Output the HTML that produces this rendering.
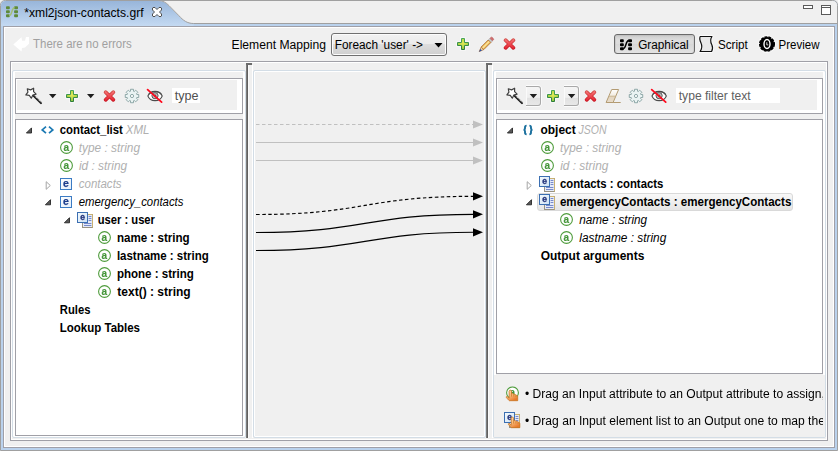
<!DOCTYPE html>
<html><head><meta charset="utf-8"><title>xml2json-contacts.grf</title>
<style>
html,body{margin:0;padding:0}
body{width:838px;height:451px;overflow:hidden;background:#f0f0f0;position:relative;font-family:"Liberation Sans",sans-serif;font-size:12px;color:#000}
.a{position:absolute}
.t{position:absolute;white-space:pre;line-height:12px;font-size:12px;transform-origin:0 0}
.b{font-weight:bold}
.i{font-style:italic}
svg{position:absolute;overflow:visible}
.box{position:absolute;box-sizing:border-box}

</style></head>
<body>
<!-- window frame -->
<svg class="a" style="left:0;top:0" width="838" height="451" viewBox="0 0 838 451">
  <defs>
    <linearGradient id="tabg" x1="0" y1="0" x2="0" y2="1">
      <stop offset="0" stop-color="#98b5da"/>
      <stop offset="1" stop-color="#c4daf2"/>
    </linearGradient>
  </defs>
  <!-- outer frame fill (blue band) -->
  <path d="M0.5,450.5 L0.5,5.5 Q0.5,0.5 5.5,0.5 L832.5,0.5 Q837.5,0.5 837.5,5.5 L837.5,450.5 Z" fill="#bad2ed" stroke="#a0a0a0"/>
  <!-- tab bar background right of tab -->
  <path d="M5.5,1 L832.5,1 Q837,1 837,5.5 L837,23 L1,23 L1,5.5 Q1,1 5.5,1 Z" fill="#f0f0f0"/>
  <!-- tab -->
  <path d="M1,26 L1,5.5 Q1,1 5.5,1 L158,1 C163,1 166,2.9 169,5.9 L179,16.1 C183,20.4 187,23.5 193.5,23.5 L193.5,26 Z" fill="url(#tabg)"/>
  <path d="M158,0.5 C163,0.5 166,2.6 169,5.6 L179,15.8 C183,20.2 187,23.5 193.5,23.5 L837,23.5" fill="none" stroke="#a0a0a0"/>
  <!-- inner content -->
  <rect x="3.5" y="26.5" width="831" height="421" fill="#f0f0f0" stroke="#a0a0a8"/>
  <path d="M4.5,446.5 L4.5,27.5 L833.5,27.5 L833.5,446.5 Z" fill="none" stroke="#ffffff"/>
</svg>
<!-- outer panel -->
<div class="box" style="left:10px;top:61px;width:818px;height:380px;border:1px solid #a0a0a7;box-shadow:inset 0 0 0 1px #fff"></div>
<!-- sub panels -->
<div class="box" style="left:12px;top:70px;width:234px;height:368px;border:1px solid #d3dde6;border-radius:2px;box-shadow:inset 0 0 0 1px #fff,inset 2px 0 0 0 #fff,inset -2px 0 0 0 #fff"></div>
<div class="box" style="left:253px;top:70px;width:233px;height:368px;border:1px solid #d3dde6;border-radius:2px;box-shadow:inset 0 0 0 1px #fff"></div>
<div class="box" style="left:493px;top:70px;width:333px;height:368px;border:1px solid #d3dde6;border-radius:2px;box-shadow:inset 0 0 0 1px #fff,inset 2px 0 0 0 #fff,inset -2px 0 0 0 #fff"></div>
<!-- sashes -->
<div class="a" style="left:246px;top:63px;width:2px;height:375px;background:linear-gradient(90deg,#7c7c7c 50%,#606060 50%)"></div>
<div class="a" style="left:246px;top:63px;width:6px;height:2px;background:#6b6b6b"></div>
<div class="a" style="left:252px;top:65px;width:1px;height:373px;background:#fff"></div>
<div class="a" style="left:248px;top:65px;width:1px;height:373px;background:#fafafa"></div>
<div class="a" style="left:486px;top:63px;width:2px;height:375px;background:linear-gradient(90deg,#7c7c7c 50%,#606060 50%)"></div>
<div class="a" style="left:486px;top:63px;width:6px;height:2px;background:#6b6b6b"></div>
<div class="a" style="left:492px;top:65px;width:1px;height:373px;background:#fff"></div>
<div class="a" style="left:488px;top:65px;width:1px;height:373px;background:#fafafa"></div>
<!-- left toolbar box / tree -->
<div class="box" style="left:15px;top:78px;width:228px;height:36px;border:1px solid #a0a0a7;background:#fff"><div class="a" style="left:1px;top:1px;width:220px;height:30px;background:#f0f0f0"></div></div>
<div class="box" style="left:15px;top:119px;width:228px;height:317px;border:1px solid #a0a0a7;background:#fff"></div>
<!-- right toolbar box / tree -->
<div class="box" style="left:496px;top:78px;width:327px;height:36px;border:1px solid #a0a0a7;background:#fff"><div class="a" style="left:1px;top:1px;width:319px;height:30px;background:#f0f0f0"></div></div>
<div class="box" style="left:496px;top:119px;width:327px;height:255px;border:1px solid #a0a0a7;background:#fff"></div>
<div class="box" style="left:526px;top:86px;width:15px;height:20px;border:1px solid #a9a9a9;border-left:none;border-radius:0 3px 3px 0;background:linear-gradient(#f5f5f5 0,#efefef 58%,#e1e1e1 60%,#e8e8e8 100%);box-shadow:1px 0 0 0 rgba(255,255,255,.8),0 1px 0 0 rgba(255,255,255,.8),0 -1px 0 0 rgba(255,255,255,.8),inset 1px 0 0 0 #fafafa"></div>
<div class="box" style="left:564px;top:86px;width:15px;height:20px;border:1px solid #a9a9a9;border-left:none;border-radius:0 3px 3px 0;background:linear-gradient(#f5f5f5 0,#efefef 58%,#e1e1e1 60%,#e8e8e8 100%);box-shadow:1px 0 0 0 rgba(255,255,255,.8),0 1px 0 0 rgba(255,255,255,.8),0 -1px 0 0 rgba(255,255,255,.8),inset 1px 0 0 0 #fafafa"></div>
<div class="a" style="left:494px;top:375px;width:331px;height:62px;background:#f0f0f0"></div>
<!-- filter inputs -->
<div class="a" style="left:172px;top:88px;width:28px;height:15px;background:#fff"></div>
<div class="a" style="left:676px;top:88px;width:104px;height:15px;background:#fff"></div>
<!-- combo -->
<div class="box" style="left:331px;top:33px;width:116px;height:23px;border:1px solid #707070;border-radius:3px;background:linear-gradient(#f2f2f2 0,#ebebeb 50%,#dddddd 50%,#cfcfcf 100%);box-shadow:inset 0 0 0 1px #fcfcfc"></div>
<svg style="left:434px;top:43px" width="9" height="5" viewBox="0 0 9 5"><path d="M0.5,0 L8.5,0 L4.5,4.5 Z" fill="#000"/></svg>
<!-- graphical button -->
<div class="box" style="left:614px;top:34px;width:81px;height:20px;border:1px solid #6a6a6a;border-radius:3px;background:linear-gradient(#bcbcbc 0,#d2d2d2 10%,#dddddd 28%,#dcdcdc 50%,#d7d7d7 52%,#e3e3e3 100%);box-shadow:inset 1px 0 0 #cacaca,inset -1px 0 0 #d0d0d0"></div>
<!-- selection -->
<div class="box" style="left:537px;top:193px;width:256px;height:18px;border:1px solid #d9d9d9;border-radius:3px;background:linear-gradient(#f8f8f8,#e5e5e5)"></div>
<!-- connection lines -->
<svg style="left:0;top:0" width="838" height="451" viewBox="0 0 838 451">
  <g stroke="#c0c0c0" fill="none">
    <path d="M256,124.5 L474,124.5" stroke-dasharray="3.5 2.5"/>
    <path d="M256,142.5 L474,142.5"/>
    <path d="M256,160.5 L474,160.5"/>
  </g>
  <g fill="#c0c0c0">
    <path d="M473,120.4 L483,124.4 L473,128.4 Z"/>
    <path d="M473,138.4 L483,142.4 L473,146.4 Z"/>
    <path d="M473,156.4 L483,160.4 L473,164.4 Z"/>
  </g>
  <g stroke="#000" fill="none" stroke-width="1.15">
    <path d="M256,214.5 C365,214.5 365,196.3 474,196.3" stroke-dasharray="3.5 2.5"/>
    <path d="M256,232.5 C365,232.5 365,214.3 474,214.3"/>
    <path d="M256,250.5 C365,250.5 365,232.3 474,232.3"/>
  </g>
  <g fill="#000">
    <path d="M473,192.2 L483,196.3 L473,200.4 Z"/>
    <path d="M473,210.2 L483,214.3 L473,218.4 Z"/>
    <path d="M473,228.2 L483,232.3 L473,236.4 Z"/>
  </g>
</svg>

<!-- icons -->
<svg style="left:6px;top:6px" width="12" height="12" viewBox="0 0 12 12" ><rect x="0" y="0.2" width="3.8" height="3" rx="0.9" fill="#5f8a38"/><rect x="8.1" y="0.2" width="3.9" height="3" rx="0.9" fill="#5f8a38"/><rect x="0" y="4.2" width="3.8" height="3" rx="0.9" fill="#5f8a38"/><rect x="8.1" y="4.2" width="3.9" height="3" rx="0.9" fill="#5f8a38"/><rect x="0" y="8.2" width="3.8" height="3" rx="0.9" fill="#5f8a38"/><rect x="8.1" y="8.2" width="3.9" height="3" rx="0.9" fill="#5f8a38"/><path d="M3.2,9.7 C6.2,9.7 5.6,1.6 8.6,1.6" fill="none" stroke="#a3bf74" stroke-width="1.5"/></svg>
<svg style="left:152px;top:7px" width="10" height="10" viewBox="0 0 10 10" ><path d="M1,0.5 L3,0.5 L5,2.5 L7,0.5 L9,0.5 L9.5,1 L9.5,3 L7.5,5 L9.5,7 L9.5,9 L9,9.5 L7,9.5 L5,7.5 L3,9.5 L1,9.5 L0.5,9 L0.5,7 L2.5,5 L0.5,3 L0.5,1 Z" fill="#fff" stroke="#505050" stroke-linejoin="round"/></svg>
<svg style="left:803px;top:5px" width="10" height="4" viewBox="0 0 10 4" ><rect x="0.5" y="0.5" width="9" height="3" fill="#fff" stroke="#5a5a5a"/></svg>
<svg style="left:821px;top:5px" width="10" height="10" viewBox="0 0 10 10" ><rect x="0.5" y="0.5" width="9" height="9" fill="#fff" stroke="#5a5a5a"/><path d="M0.5,2.5 L9.5,2.5" stroke="#5a5a5a"/></svg>
<svg style="left:13px;top:36px" width="18" height="16" viewBox="0 0 18 16" ><path d="M0.3,8.4 L8.5,1.3 L9,4.8 L12,4.8 L13,1 L16,1 L16,7.7 L12,11.6 L9,12 L8.5,15.4 Z" fill="#fff"/></svg>
<svg style="left:457px;top:38px" width="12" height="12" viewBox="0 0 12 12" ><defs><radialGradient id="g1" cx="0.5" cy="0.4" r="0.65"><stop offset="0" stop-color="#e3ec58"/><stop offset="0.55" stop-color="#b4d648"/><stop offset="1" stop-color="#7cbc44"/></radialGradient><linearGradient id="g2" gradientUnits="userSpaceOnUse" x1="0" y1="0" x2="0" y2="12"><stop offset="0" stop-color="#49a85c"/><stop offset="1" stop-color="#2b7a3a"/></linearGradient></defs><path d="M4.5,0.5 H7.5 V4.5 H11.5 V7.5 H7.5 V11.5 H4.5 V7.5 H0.5 V4.5 H4.5 Z" fill="none" stroke="#fff" stroke-width="2.6" opacity="0.55"/><path d="M4.5,0.5 H7.5 V4.5 H11.5 V7.5 H7.5 V11.5 H4.5 V7.5 H0.5 V4.5 H4.5 Z" fill="url(#g1)" stroke="url(#g2)" stroke-width="1"/></svg>
<svg style="left:478px;top:36px;transform:translate(0px,0.8px)" width="16" height="16" viewBox="0 0 16 16" ><g transform="rotate(45 8 8)"><rect x="6.2" y="-1.6" width="3.6" height="2.6" rx="1.1" fill="#d06e6e" stroke="#b85656" stroke-width="0.6"/><rect x="6.2" y="1" width="3.6" height="2" fill="#d0d0d0" stroke="#9a9a9a" stroke-width="0.5"/><rect x="6.2" y="3" width="3.6" height="10" fill="#f2c25a" stroke="#ae6f35" stroke-width="0.9"/><rect x="7.3" y="3.4" width="1.1" height="9.4" fill="#fbe6a8"/><path d="M6.2,13 L9.8,13 L8,17.6 Z" fill="#ecd2a6" stroke="#ae6f35" stroke-width="0.7"/><path d="M6.9,14.9 L9.1,14.9 L8,17.9 Z" fill="#2a52a8"/></g></svg>
<svg style="left:503px;top:38px" width="13" height="12" viewBox="0 0 13 12" ><defs><linearGradient id="g3" gradientUnits="userSpaceOnUse" x1="0" y1="0" x2="0" y2="12"><stop offset="0" stop-color="#f58080"/><stop offset="0.5" stop-color="#ee4a52"/><stop offset="1" stop-color="#e01a2a"/></linearGradient><linearGradient id="g4" gradientUnits="userSpaceOnUse" x1="0" y1="0" x2="0" y2="12"><stop offset="0" stop-color="#d2524a"/><stop offset="1" stop-color="#c8101e"/></linearGradient></defs><path d="M2.6,2.2 L10.4,9.8 M10.4,2.2 L2.6,9.8" stroke="url(#g4)" stroke-width="3.7" stroke-linecap="round" fill="none"/><path d="M2.6,2.2 L10.4,9.8 M10.4,2.2 L2.6,9.8" stroke="url(#g3)" stroke-width="2.1" stroke-linecap="round" fill="none"/></svg>
<svg style="left:620px;top:39px" width="12" height="12" viewBox="0 0 12 12" ><rect x="0" y="0.2" width="3.8" height="3" rx="0.9" fill="#000"/><rect x="8.1" y="0.2" width="3.9" height="3" rx="0.9" fill="#000"/><rect x="0" y="4.2" width="3.8" height="3" rx="0.9" fill="#000"/><rect x="8.1" y="4.2" width="3.9" height="3" rx="0.9" fill="#000"/><rect x="0" y="8.2" width="3.8" height="3" rx="0.9" fill="#000"/><rect x="8.1" y="8.2" width="3.9" height="3" rx="0.9" fill="#000"/><path d="M3.2,9.7 C6.2,9.7 5.6,1.6 8.6,1.6" fill="none" stroke="#000" stroke-width="1.5"/></svg>
<svg style="left:698px;top:34px" width="16" height="18" viewBox="0 0 16 18" ><path d="M2.2,2.5 L14,2.5 C11.6,5.8 12.4,8 13.8,10.8 C15.2,13.6 14.6,15.6 13.6,17.5 L2,17.5 C4.6,14 4.4,12 3,9 C1.6,6 1.2,4.4 2.2,2.5 Z" fill="#e9e9e9" stroke="#fff" stroke-width="3" stroke-linejoin="round" opacity="0.9"/><path d="M2.2,2.5 L14,2.5 C11.6,5.8 12.4,8 13.8,10.8 C15.2,13.6 14.6,15.6 13.6,17.5 L2,17.5 C4.6,14 4.4,12 3,9 C1.6,6 1.2,4.4 2.2,2.5 Z" fill="#e9e9e9" stroke="#111" stroke-width="1.2" stroke-linejoin="round"/></svg>
<svg style="left:758px;top:35px" width="18" height="18" viewBox="0 0 18 18" ><circle cx="9" cy="9" r="8.9" fill="#fff" opacity="0.75"/><ellipse cx="9" cy="9" rx="7.3" ry="7.1" fill="#000" stroke="#000" stroke-width="1.5" stroke-dasharray="2.9 1.0"/><ellipse cx="9" cy="9" rx="3.0" ry="4.5" fill="#000" stroke="#fff" stroke-width="1.4"/><path d="M8.8,7.2 L8.8,9.9 L10.3,9.9" fill="none" stroke="#e8e8e8" stroke-width="0.9"/></svg>
<svg style="left:25px;top:87px" width="18" height="18" viewBox="0 0 18 18" ><path d="M7.6,7.8 L16,16.1" stroke="#1a1a1a" stroke-width="2.1" stroke-linecap="round" fill="none"/><path d="M9.3,8.5 L16.4,15.6" stroke="#fff" stroke-width="0.9" fill="none" stroke-dasharray="1.4 0.7"/><polygon points="8.63,1.22 8.61,4.68 11.11,7.06 7.82,8.11 6.32,11.23 4.30,8.42 0.88,7.96 2.93,5.18 2.31,1.77 5.59,2.86" fill="#fff" stroke="#404040" stroke-width="1.2" stroke-linejoin="round"/></svg>
<svg style="left:66px;top:90px" width="12" height="12" viewBox="0 0 12 12" ><defs><radialGradient id="g5" cx="0.5" cy="0.4" r="0.65"><stop offset="0" stop-color="#e3ec58"/><stop offset="0.55" stop-color="#b4d648"/><stop offset="1" stop-color="#7cbc44"/></radialGradient><linearGradient id="g6" gradientUnits="userSpaceOnUse" x1="0" y1="0" x2="0" y2="12"><stop offset="0" stop-color="#49a85c"/><stop offset="1" stop-color="#2b7a3a"/></linearGradient></defs><path d="M4.5,0.5 H7.5 V4.5 H11.5 V7.5 H7.5 V11.5 H4.5 V7.5 H0.5 V4.5 H4.5 Z" fill="none" stroke="#fff" stroke-width="2.6" opacity="0.55"/><path d="M4.5,0.5 H7.5 V4.5 H11.5 V7.5 H7.5 V11.5 H4.5 V7.5 H0.5 V4.5 H4.5 Z" fill="url(#g5)" stroke="url(#g6)" stroke-width="1"/></svg>
<svg style="left:103px;top:90px" width="13" height="12" viewBox="0 0 13 12" ><defs><linearGradient id="g7" gradientUnits="userSpaceOnUse" x1="0" y1="0" x2="0" y2="12"><stop offset="0" stop-color="#f58080"/><stop offset="0.5" stop-color="#ee4a52"/><stop offset="1" stop-color="#e01a2a"/></linearGradient><linearGradient id="g8" gradientUnits="userSpaceOnUse" x1="0" y1="0" x2="0" y2="12"><stop offset="0" stop-color="#d2524a"/><stop offset="1" stop-color="#c8101e"/></linearGradient></defs><path d="M2.6,2.2 L10.4,9.8 M10.4,2.2 L2.6,9.8" stroke="url(#g8)" stroke-width="3.7" stroke-linecap="round" fill="none"/><path d="M2.6,2.2 L10.4,9.8 M10.4,2.2 L2.6,9.8" stroke="url(#g7)" stroke-width="2.1" stroke-linecap="round" fill="none"/></svg>
<svg style="left:506px;top:87px" width="18" height="18" viewBox="0 0 18 18" ><path d="M7.6,7.8 L16,16.1" stroke="#1a1a1a" stroke-width="2.1" stroke-linecap="round" fill="none"/><path d="M9.3,8.5 L16.4,15.6" stroke="#fff" stroke-width="0.9" fill="none" stroke-dasharray="1.4 0.7"/><polygon points="8.63,1.22 8.61,4.68 11.11,7.06 7.82,8.11 6.32,11.23 4.30,8.42 0.88,7.96 2.93,5.18 2.31,1.77 5.59,2.86" fill="#fff" stroke="#404040" stroke-width="1.2" stroke-linejoin="round"/></svg>
<svg style="left:547px;top:90px" width="12" height="12" viewBox="0 0 12 12" ><defs><radialGradient id="g9" cx="0.5" cy="0.4" r="0.65"><stop offset="0" stop-color="#e3ec58"/><stop offset="0.55" stop-color="#b4d648"/><stop offset="1" stop-color="#7cbc44"/></radialGradient><linearGradient id="g10" gradientUnits="userSpaceOnUse" x1="0" y1="0" x2="0" y2="12"><stop offset="0" stop-color="#49a85c"/><stop offset="1" stop-color="#2b7a3a"/></linearGradient></defs><path d="M4.5,0.5 H7.5 V4.5 H11.5 V7.5 H7.5 V11.5 H4.5 V7.5 H0.5 V4.5 H4.5 Z" fill="none" stroke="#fff" stroke-width="2.6" opacity="0.55"/><path d="M4.5,0.5 H7.5 V4.5 H11.5 V7.5 H7.5 V11.5 H4.5 V7.5 H0.5 V4.5 H4.5 Z" fill="url(#g9)" stroke="url(#g10)" stroke-width="1"/></svg>
<svg style="left:584px;top:90px" width="13" height="12" viewBox="0 0 13 12" ><defs><linearGradient id="g11" gradientUnits="userSpaceOnUse" x1="0" y1="0" x2="0" y2="12"><stop offset="0" stop-color="#f58080"/><stop offset="0.5" stop-color="#ee4a52"/><stop offset="1" stop-color="#e01a2a"/></linearGradient><linearGradient id="g12" gradientUnits="userSpaceOnUse" x1="0" y1="0" x2="0" y2="12"><stop offset="0" stop-color="#d2524a"/><stop offset="1" stop-color="#c8101e"/></linearGradient></defs><path d="M2.6,2.2 L10.4,9.8 M10.4,2.2 L2.6,9.8" stroke="url(#g12)" stroke-width="3.7" stroke-linecap="round" fill="none"/><path d="M2.6,2.2 L10.4,9.8 M10.4,2.2 L2.6,9.8" stroke="url(#g11)" stroke-width="2.1" stroke-linecap="round" fill="none"/></svg>
<svg style="left:49px;top:94px" width="8" height="5" viewBox="0 0 8 5" ><path d="M0,0 L7.4,0 L3.7,4.3 Z" fill="#1e1e1e"/></svg>
<svg style="left:87px;top:94px" width="8" height="5" viewBox="0 0 8 5" ><path d="M0,0 L7.4,0 L3.7,4.3 Z" fill="#1e1e1e"/></svg>
<svg style="left:529px;top:94px;transform:translate(0.7px,0px)" width="8" height="5" viewBox="0 0 8 5" ><path d="M0,0 L7.4,0 L3.7,4.3 Z" fill="#1e1e1e"/></svg>
<svg style="left:567px;top:94px;transform:translate(0.9px,0px)" width="8" height="5" viewBox="0 0 8 5" ><path d="M0,0 L7.4,0 L3.7,4.3 Z" fill="#1e1e1e"/></svg>
<svg style="left:124px;top:88px" width="16" height="16" viewBox="0 0 16 16" ><polygon points="6.47,3.24 6.49,1.27 9.51,1.27 9.53,3.24 10.29,3.55 11.70,2.17 13.83,4.30 12.45,5.71 12.76,6.47 14.73,6.49 14.73,9.51 12.76,9.53 12.45,10.29 13.83,11.70 11.70,13.83 10.29,12.45 9.53,12.76 9.51,14.73 6.49,14.73 6.47,12.76 5.71,12.45 4.30,13.83 2.17,11.70 3.55,10.29 3.24,9.53 1.27,9.51 1.27,6.49 3.24,6.47 3.55,5.71 2.17,4.30 4.30,2.17 5.71,3.55" fill="#eaf3f3" stroke="#8ea8a8" stroke-width="1" stroke-linejoin="round"/><circle cx="8" cy="8" r="1.6" fill="#fff" stroke="#8ea8a8" stroke-width="1"/></svg>
<svg style="left:628px;top:88px" width="16" height="16" viewBox="0 0 16 16" ><polygon points="6.47,3.24 6.49,1.27 9.51,1.27 9.53,3.24 10.29,3.55 11.70,2.17 13.83,4.30 12.45,5.71 12.76,6.47 14.73,6.49 14.73,9.51 12.76,9.53 12.45,10.29 13.83,11.70 11.70,13.83 10.29,12.45 9.53,12.76 9.51,14.73 6.49,14.73 6.47,12.76 5.71,12.45 4.30,13.83 2.17,11.70 3.55,10.29 3.24,9.53 1.27,9.51 1.27,6.49 3.24,6.47 3.55,5.71 2.17,4.30 4.30,2.17 5.71,3.55" fill="#eaf3f3" stroke="#8ea8a8" stroke-width="1" stroke-linejoin="round"/><circle cx="8" cy="8" r="1.6" fill="#fff" stroke="#8ea8a8" stroke-width="1"/></svg>
<svg style="left:146px;top:88px;transform:translate(0.4px,0px)" width="18" height="16" viewBox="0 0 18 16" ><path d="M1.5,8 C3.8,1.8 13.5,1.8 15.8,8 C13.5,14.2 3.8,14.2 1.5,8 Z" fill="#fff" stroke="#4c4c4c" stroke-width="1.1"/><path d="M2.6,6.2 C5,2.9 12.4,2.9 14.8,6.2" fill="none" stroke="#4c4c4c" stroke-width="1.1"/><circle cx="8.6" cy="7.7" r="3.1" fill="#bdbdbd" stroke="#5a5a5a" stroke-width="1"/><circle cx="8.6" cy="7.7" r="1.2" fill="#555"/><path d="M1.2,1.7 L15.2,14.1" stroke="#ff0a1e" stroke-width="1.8" stroke-linecap="round"/></svg>
<svg style="left:650px;top:88px;transform:translate(0.5px,0px)" width="18" height="16" viewBox="0 0 18 16" ><path d="M1.5,8 C3.8,1.8 13.5,1.8 15.8,8 C13.5,14.2 3.8,14.2 1.5,8 Z" fill="#fff" stroke="#4c4c4c" stroke-width="1.1"/><path d="M2.6,6.2 C5,2.9 12.4,2.9 14.8,6.2" fill="none" stroke="#4c4c4c" stroke-width="1.1"/><circle cx="8.6" cy="7.7" r="3.1" fill="#bdbdbd" stroke="#5a5a5a" stroke-width="1"/><circle cx="8.6" cy="7.7" r="1.2" fill="#555"/><path d="M1.2,1.7 L15.2,14.1" stroke="#ff0a1e" stroke-width="1.8" stroke-linecap="round"/></svg>
<svg style="left:605px;top:89px;transform:translate(0.5px,0px)" width="16" height="14" viewBox="0 0 16 14" ><defs><linearGradient id="g13" x1="0" y1="0" x2="0" y2="1"><stop offset="0" stop-color="#fff"/><stop offset="0.5" stop-color="#f2ebe0"/><stop offset="0.55" stop-color="#e3d5c0"/><stop offset="1" stop-color="#e8dccb"/></linearGradient></defs><path d="M6.2,0.5 L13.1,0.5 L7.6,13.5 L0.6,13.5 Z" fill="url(#g13)" stroke="#b39b72" stroke-width="1" stroke-linejoin="round"/><path d="M3.6,7.2 L10.2,7.2" stroke="#c6b28d" stroke-width="0.9"/><path d="M7.6,13.5 L15.2,13.5" stroke="#b39b72" stroke-width="1"/></svg>
<svg style="left:26px;top:127px;transform:translate(0px,0.5px)" width="7" height="7" viewBox="0 0 7 7" ><path d="M0.4,5.5 L5.5,5.5 L5.5,0.4 Z" fill="#595959" stroke="#262626" stroke-width="0.9" stroke-linejoin="round"/></svg>
<svg style="left:41px;top:126px" width="13" height="8" viewBox="0 0 13 8" ><path d="M5,0.6 L1.2,3.9 L5,7.2 M8,0.6 L11.8,3.9 L8,7.2" fill="none" stroke="#1b79b3" stroke-width="1.7" stroke-linejoin="miter"/></svg>
<svg style="left:60px;top:141px;will-change:transform" width="13" height="13" viewBox="0 0 13 13" ><circle cx="6.5" cy="6.5" r="5.9" fill="#fff" stroke="#4f9c3c" stroke-width="1.1"/><text x="6.4" y="9.6" text-anchor="middle" font-family="Liberation Sans, sans-serif" font-weight="bold" font-size="10" fill="#45963a" stroke="#45963a" stroke-width="0.15">a</text></svg>
<svg style="left:60px;top:159px;will-change:transform" width="13" height="13" viewBox="0 0 13 13" ><circle cx="6.5" cy="6.5" r="5.9" fill="#fff" stroke="#4f9c3c" stroke-width="1.1"/><text x="6.4" y="9.6" text-anchor="middle" font-family="Liberation Sans, sans-serif" font-weight="bold" font-size="10" fill="#45963a" stroke="#45963a" stroke-width="0.15">a</text></svg>
<svg style="left:45px;top:181px;transform:translate(0.7px,0px)" width="6" height="9" viewBox="0 0 6 9" ><path d="M0.5,0.7 L0.5,8.3 L4.6,4.5 Z" fill="#fff" stroke="#a6a6a6" stroke-width="1" stroke-linejoin="round"/></svg>
<svg style="left:60px;top:178px;will-change:transform" width="12" height="12" viewBox="0 0 12 12" ><defs><linearGradient id="g14" x1="0" y1="0" x2="1" y2="1"><stop offset="0" stop-color="#ffffff"/><stop offset="1" stop-color="#e3eefa"/></linearGradient></defs><rect x="0.5" y="0.5" width="11" height="11" fill="url(#g14)" stroke="#3b7bc4"/><text x="6" y="9.2" text-anchor="middle" font-family="Liberation Sans, sans-serif" font-weight="bold" font-size="10.5" fill="#1c3d8c" stroke="#1c3d8c" stroke-width="0.25">e</text></svg>
<svg style="left:45px;top:199px;transform:translate(0px,0.3px)" width="7" height="7" viewBox="0 0 7 7" ><path d="M0.4,5.5 L5.5,5.5 L5.5,0.4 Z" fill="#595959" stroke="#262626" stroke-width="0.9" stroke-linejoin="round"/></svg>
<svg style="left:60px;top:196px;will-change:transform" width="12" height="12" viewBox="0 0 12 12" ><defs><linearGradient id="g15" x1="0" y1="0" x2="1" y2="1"><stop offset="0" stop-color="#ffffff"/><stop offset="1" stop-color="#e3eefa"/></linearGradient></defs><rect x="0.5" y="0.5" width="11" height="11" fill="url(#g15)" stroke="#3b7bc4"/><text x="6" y="9.2" text-anchor="middle" font-family="Liberation Sans, sans-serif" font-weight="bold" font-size="10.5" fill="#1c3d8c" stroke="#1c3d8c" stroke-width="0.25">e</text></svg>
<svg style="left:64px;top:217px;transform:translate(0px,0.3px)" width="7" height="7" viewBox="0 0 7 7" ><path d="M0.4,5.5 L5.5,5.5 L5.5,0.4 Z" fill="#595959" stroke="#262626" stroke-width="0.9" stroke-linejoin="round"/></svg>
<svg style="left:77px;top:212px;will-change:transform" width="16" height="16" viewBox="0 0 16 16" ><defs><linearGradient id="g16" x1="0" y1="0" x2="1" y2="1"><stop offset="0" stop-color="#f4fafd"/><stop offset="1" stop-color="#cfe2f4"/></linearGradient></defs><rect x="5.5" y="2.5" width="10" height="13" fill="#e4eaf8" stroke="#979283"/><path d="M5.5,2.5 L15.5,2.5 L15.5,15.5" fill="none" stroke="#c9b173"/><path d="M11.6,4.5 L14.4,4.5" stroke="#6a7fc4" stroke-width="0.9"/><path d="M11.6,6.5 L14.4,6.5" stroke="#6a7fc4" stroke-width="0.9"/><path d="M11.6,8.5 L14.4,8.5" stroke="#6a7fc4" stroke-width="0.9"/><path d="M7,11.5 L14.4,11.5" stroke="#6a7fc4" stroke-width="0.9"/><path d="M7,13.5 L14.4,13.5" stroke="#6a7fc4" stroke-width="0.9"/><rect x="0.5" y="0.5" width="10" height="10" fill="url(#g16)" stroke="#3b6fb2"/><text x="5.6" y="7.9" text-anchor="middle" font-family="Liberation Sans, sans-serif" font-weight="bold" font-size="8.6" fill="#27377e" stroke="#27377e" stroke-width="0.35">e</text></svg>
<svg style="left:98px;top:231px;will-change:transform" width="13" height="13" viewBox="0 0 13 13" ><circle cx="6.5" cy="6.5" r="5.9" fill="#fff" stroke="#4f9c3c" stroke-width="1.1"/><text x="6.4" y="9.6" text-anchor="middle" font-family="Liberation Sans, sans-serif" font-weight="bold" font-size="10" fill="#45963a" stroke="#45963a" stroke-width="0.15">a</text></svg>
<svg style="left:98px;top:249px;will-change:transform" width="13" height="13" viewBox="0 0 13 13" ><circle cx="6.5" cy="6.5" r="5.9" fill="#fff" stroke="#4f9c3c" stroke-width="1.1"/><text x="6.4" y="9.6" text-anchor="middle" font-family="Liberation Sans, sans-serif" font-weight="bold" font-size="10" fill="#45963a" stroke="#45963a" stroke-width="0.15">a</text></svg>
<svg style="left:98px;top:267px;will-change:transform" width="13" height="13" viewBox="0 0 13 13" ><circle cx="6.5" cy="6.5" r="5.9" fill="#fff" stroke="#4f9c3c" stroke-width="1.1"/><text x="6.4" y="9.6" text-anchor="middle" font-family="Liberation Sans, sans-serif" font-weight="bold" font-size="10" fill="#45963a" stroke="#45963a" stroke-width="0.15">a</text></svg>
<svg style="left:98px;top:285px;will-change:transform" width="13" height="13" viewBox="0 0 13 13" ><circle cx="6.5" cy="6.5" r="5.9" fill="#fff" stroke="#4f9c3c" stroke-width="1.1"/><text x="6.4" y="9.6" text-anchor="middle" font-family="Liberation Sans, sans-serif" font-weight="bold" font-size="10" fill="#45963a" stroke="#45963a" stroke-width="0.15">a</text></svg>
<svg style="left:507px;top:127px;transform:translate(0px,0.5px)" width="7" height="7" viewBox="0 0 7 7" ><path d="M0.4,5.5 L5.5,5.5 L5.5,0.4 Z" fill="#595959" stroke="#262626" stroke-width="0.9" stroke-linejoin="round"/></svg>
<svg style="left:523px;top:125px" width="11" height="10" viewBox="0 0 11 10" ><path d="M3.6,0.6 C2.2,0.6 2,1.2 2,2.4 L2,3.4 C2,4.2 1.6,4.7 0.6,4.8 C1.6,4.9 2,5.4 2,6.2 L2,7.4 C2,8.6 2.2,9.2 3.6,9.2" fill="none" stroke="#1a709e" stroke-width="1.9"/><path d="M6.4,0.6 C7.8,0.6 8,1.2 8,2.4 L8,3.4 C8,4.2 8.4,4.7 9.4,4.8 C8.4,4.9 8,5.4 8,6.2 L8,7.4 C8,8.6 7.8,9.2 6.4,9.2" fill="none" stroke="#1a709e" stroke-width="1.9"/></svg>
<svg style="left:541px;top:141px;will-change:transform" width="13" height="13" viewBox="0 0 13 13" ><circle cx="6.5" cy="6.5" r="5.9" fill="#fff" stroke="#4f9c3c" stroke-width="1.1"/><text x="6.4" y="9.6" text-anchor="middle" font-family="Liberation Sans, sans-serif" font-weight="bold" font-size="10" fill="#45963a" stroke="#45963a" stroke-width="0.15">a</text></svg>
<svg style="left:541px;top:159px;will-change:transform" width="13" height="13" viewBox="0 0 13 13" ><circle cx="6.5" cy="6.5" r="5.9" fill="#fff" stroke="#4f9c3c" stroke-width="1.1"/><text x="6.4" y="9.6" text-anchor="middle" font-family="Liberation Sans, sans-serif" font-weight="bold" font-size="10" fill="#45963a" stroke="#45963a" stroke-width="0.15">a</text></svg>
<svg style="left:526px;top:181px;transform:translate(0.7px,0px)" width="6" height="9" viewBox="0 0 6 9" ><path d="M0.5,0.7 L0.5,8.3 L4.6,4.5 Z" fill="#fff" stroke="#a6a6a6" stroke-width="1" stroke-linejoin="round"/></svg>
<svg style="left:539px;top:176px;will-change:transform" width="16" height="16" viewBox="0 0 16 16" ><defs><linearGradient id="g17" x1="0" y1="0" x2="1" y2="1"><stop offset="0" stop-color="#f4fafd"/><stop offset="1" stop-color="#cfe2f4"/></linearGradient></defs><rect x="5.5" y="2.5" width="10" height="13" fill="#e4eaf8" stroke="#979283"/><path d="M5.5,2.5 L15.5,2.5 L15.5,15.5" fill="none" stroke="#c9b173"/><path d="M11.6,4.5 L14.4,4.5" stroke="#6a7fc4" stroke-width="0.9"/><path d="M11.6,6.5 L14.4,6.5" stroke="#6a7fc4" stroke-width="0.9"/><path d="M11.6,8.5 L14.4,8.5" stroke="#6a7fc4" stroke-width="0.9"/><path d="M7,11.5 L14.4,11.5" stroke="#6a7fc4" stroke-width="0.9"/><path d="M7,13.5 L14.4,13.5" stroke="#6a7fc4" stroke-width="0.9"/><rect x="0.5" y="0.5" width="10" height="10" fill="url(#g17)" stroke="#3b6fb2"/><text x="5.6" y="7.9" text-anchor="middle" font-family="Liberation Sans, sans-serif" font-weight="bold" font-size="8.6" fill="#27377e" stroke="#27377e" stroke-width="0.35">e</text></svg>
<svg style="left:526px;top:199px;transform:translate(0px,0.3px)" width="7" height="7" viewBox="0 0 7 7" ><path d="M0.4,5.5 L5.5,5.5 L5.5,0.4 Z" fill="#595959" stroke="#262626" stroke-width="0.9" stroke-linejoin="round"/></svg>
<svg style="left:539px;top:194px;will-change:transform" width="16" height="16" viewBox="0 0 16 16" ><defs><linearGradient id="g18" x1="0" y1="0" x2="1" y2="1"><stop offset="0" stop-color="#f4fafd"/><stop offset="1" stop-color="#cfe2f4"/></linearGradient></defs><rect x="5.5" y="2.5" width="10" height="13" fill="#e4eaf8" stroke="#979283"/><path d="M5.5,2.5 L15.5,2.5 L15.5,15.5" fill="none" stroke="#c9b173"/><path d="M11.6,4.5 L14.4,4.5" stroke="#6a7fc4" stroke-width="0.9"/><path d="M11.6,6.5 L14.4,6.5" stroke="#6a7fc4" stroke-width="0.9"/><path d="M11.6,8.5 L14.4,8.5" stroke="#6a7fc4" stroke-width="0.9"/><path d="M7,11.5 L14.4,11.5" stroke="#6a7fc4" stroke-width="0.9"/><path d="M7,13.5 L14.4,13.5" stroke="#6a7fc4" stroke-width="0.9"/><rect x="0.5" y="0.5" width="10" height="10" fill="url(#g18)" stroke="#3b6fb2"/><text x="5.6" y="7.9" text-anchor="middle" font-family="Liberation Sans, sans-serif" font-weight="bold" font-size="8.6" fill="#27377e" stroke="#27377e" stroke-width="0.35">e</text></svg>
<svg style="left:560px;top:213px;will-change:transform" width="13" height="13" viewBox="0 0 13 13" ><circle cx="6.5" cy="6.5" r="5.9" fill="#fff" stroke="#4f9c3c" stroke-width="1.1"/><text x="6.4" y="9.6" text-anchor="middle" font-family="Liberation Sans, sans-serif" font-weight="bold" font-size="10" fill="#45963a" stroke="#45963a" stroke-width="0.15">a</text></svg>
<svg style="left:560px;top:231px;will-change:transform" width="13" height="13" viewBox="0 0 13 13" ><circle cx="6.5" cy="6.5" r="5.9" fill="#fff" stroke="#4f9c3c" stroke-width="1.1"/><text x="6.4" y="9.6" text-anchor="middle" font-family="Liberation Sans, sans-serif" font-weight="bold" font-size="10" fill="#45963a" stroke="#45963a" stroke-width="0.15">a</text></svg>
<svg style="left:506px;top:386px;transform:translate(0px,0.3px);will-change:transform" width="13" height="13" viewBox="0 0 13 13" ><circle cx="6.5" cy="6.5" r="5.9" fill="#fff" stroke="#4f9c3c" stroke-width="1.1"/><text x="6.4" y="9.6" text-anchor="middle" font-family="Liberation Sans, sans-serif" font-weight="bold" font-size="10" fill="#45963a" stroke="#45963a" stroke-width="0.15">a</text></svg>
<svg style="left:506px;top:390px" width="13" height="12" viewBox="0 0 13 12" ><defs><linearGradient id="g19" x1="0" y1="0" x2="0.6" y2="1"><stop offset="0" stop-color="#fde0b4"/><stop offset="0.55" stop-color="#f8b878"/><stop offset="1" stop-color="#e87a2c"/></linearGradient></defs><path d="M3.1,1.2 C3.1,-0.2 5.5,-0.2 5.5,1.2 L5.5,4.2 C5.6,3.4 7.6,3.3 7.8,4.4 C8.2,4.0 9.8,4.2 9.9,5.3 C10.4,5.1 11.7,5.4 11.7,6.6 L11.7,10.7 L3.4,10.7 C2.6,10.2 1.6,9 0.3,7.4 C-0.2,6.6 0.8,6.2 1.5,6.8 L3.1,8.2 Z" fill="url(#g19)" stroke="#c8741f" stroke-width="0.8" stroke-linejoin="round"/><path d="M5.5,4.2 L5.5,6.6 M7.8,4.6 L7.8,6.6 M9.9,5.5 L9.9,6.9" stroke="#c8741f" stroke-width="0.7" fill="none"/></svg>
<svg style="left:504px;top:412px;will-change:transform" width="16" height="16" viewBox="0 0 16 16" ><defs><linearGradient id="g20" x1="0" y1="0" x2="1" y2="1"><stop offset="0" stop-color="#f4fafd"/><stop offset="1" stop-color="#cfe2f4"/></linearGradient></defs><rect x="5.5" y="2.5" width="10" height="13" fill="#e4eaf8" stroke="#979283"/><path d="M5.5,2.5 L15.5,2.5 L15.5,15.5" fill="none" stroke="#c9b173"/><path d="M11.6,4.5 L14.4,4.5" stroke="#6a7fc4" stroke-width="0.9"/><path d="M11.6,6.5 L14.4,6.5" stroke="#6a7fc4" stroke-width="0.9"/><path d="M11.6,8.5 L14.4,8.5" stroke="#6a7fc4" stroke-width="0.9"/><path d="M7,11.5 L14.4,11.5" stroke="#6a7fc4" stroke-width="0.9"/><path d="M7,13.5 L14.4,13.5" stroke="#6a7fc4" stroke-width="0.9"/><rect x="0.5" y="0.5" width="10" height="10" fill="url(#g20)" stroke="#3b6fb2"/><text x="5.6" y="7.9" text-anchor="middle" font-family="Liberation Sans, sans-serif" font-weight="bold" font-size="8.6" fill="#27377e" stroke="#27377e" stroke-width="0.35">e</text></svg>
<svg style="left:508px;top:417px;transform:translate(0.1px,0px)" width="13" height="12" viewBox="0 0 13 12" ><defs><linearGradient id="g21" x1="0" y1="0" x2="0.6" y2="1"><stop offset="0" stop-color="#fde0b4"/><stop offset="0.55" stop-color="#f8b878"/><stop offset="1" stop-color="#e87a2c"/></linearGradient></defs><path d="M3.1,1.2 C3.1,-0.2 5.5,-0.2 5.5,1.2 L5.5,4.2 C5.6,3.4 7.6,3.3 7.8,4.4 C8.2,4.0 9.8,4.2 9.9,5.3 C10.4,5.1 11.7,5.4 11.7,6.6 L11.7,10.7 L3.4,10.7 C2.6,10.2 1.6,9 0.3,7.4 C-0.2,6.6 0.8,6.2 1.5,6.8 L3.1,8.2 Z" fill="url(#g21)" stroke="#c8741f" stroke-width="0.8" stroke-linejoin="round"/><path d="M5.5,4.2 L5.5,6.6 M7.8,4.6 L7.8,6.6 M9.9,5.5 L9.9,6.9" stroke="#c8741f" stroke-width="0.7" fill="none"/></svg>
<!-- text -->
<div class="t " style="left:24px;top:7px;transform:translateX(0.25px) scaleX(1.0106);">*xml2json-contacts.grf</div>
<div class="t " style="left:33px;top:38px;transform:translateX(0.06px) scaleX(0.9538);color:#a0a0a0;">There are no errors</div>
<div class="t " style="left:231px;top:39px;transform:translateX(0.59px) scaleX(1.0104);">Element Mapping</div>
<div class="t " style="left:334px;top:39px;transform:translateX(0.71px) scaleX(0.9852);">Foreach 'user' -&gt;</div>
<div class="t " style="left:638px;top:39px;transform:translateX(0.21px) scaleX(0.9800);">Graphical</div>
<div class="t " style="left:717px;top:39px;transform:translateX(0.91px) scaleX(0.9733);">Script</div>
<div class="t " style="left:778px;top:39px;transform:translateX(0.54px) scaleX(0.9581);">Preview</div>
<div class="t " style="left:174px;top:90px;transform:translateX(0.84px) scaleX(1.0455);color:#505050;">type</div>
<div class="t " style="left:678px;top:90px;transform:translateX(0.75px) scaleX(1.0085);color:#606060;">type filter text</div>
<div class="t b" style="left:59px;top:124px;transform:translateX(0.73px) scaleX(0.9455);">contact_list</div>
<div class="t i" style="left:125px;top:124px;transform:translateX(0.84px) scaleX(0.9583);color:#b0b0b0;">XML</div>
<div class="t i" style="left:78px;top:142px;transform:translateX(0.71px) scaleX(0.9886);color:#b0b0b0;">type : string</div>
<div class="t i" style="left:78px;top:160px;transform:translateX(0.95px) scaleX(0.9907);color:#b0b0b0;">id : string</div>
<div class="t i" style="left:78px;top:178px;transform:translateX(0.72px) scaleX(0.9591);color:#b0b0b0;">contacts</div>
<div class="t i" style="left:78px;top:196px;transform:translateX(0.73px) scaleX(0.9455);">emergency_contacts</div>
<div class="t b" style="left:97px;top:214px;transform:translateX(0.8px) scaleX(0.9306);">user : user</div>
<div class="t b" style="left:116px;top:232px;transform:translateX(0.88px) scaleX(0.9654);">name : string</div>
<div class="t b" style="left:116px;top:250px;transform:translateX(0.88px) scaleX(0.9566);">lastname : string</div>
<div class="t b" style="left:116px;top:268px;transform:translateX(0.88px) scaleX(0.9618);">phone : string</div>
<div class="t b" style="left:117px;top:286px;transform:translateX(0.35px);">text() : string</div>
<div class="t b" style="left:59px;top:304px;transform:translateX(0.8px) scaleX(0.9365);">Rules</div>
<div class="t b" style="left:59px;top:322px;transform:translateX(0.78px) scaleX(0.9576);">Lookup Tables</div>
<div class="t b" style="left:540px;top:124px;transform:translateX(0.5px) scaleX(0.9957);">object</div>
<div class="t i" style="left:578px;top:124px;transform:translateX(0.6px) scaleX(0.8750);color:#b0b0b0;">JSON</div>
<div class="t i" style="left:559px;top:142px;transform:translateX(0.91px) scaleX(0.9886);color:#b0b0b0;">type : string</div>
<div class="t i" style="left:560px;top:160px;transform:translateX(0.15px) scaleX(0.9907);color:#b0b0b0;">id : string</div>
<div class="t b" style="left:559px;top:178px;transform:translateX(0.93px) scaleX(0.9456);">contacts : contacts</div>
<div class="t b" style="left:559px;top:196px;transform:translateX(0.92px) scaleX(0.9638);">emergencyContacts : emergencyContacts</div>
<div class="t i" style="left:579px;top:214px;transform:translateX(0.26px) scaleX(0.9783);">name : string</div>
<div class="t i" style="left:579px;top:232px;transform:translateX(0.25px) scaleX(0.9880);">lastname : string</div>
<div class="t b" style="left:540px;top:250px;transform:translateX(0.7px) scaleX(0.9961);">Output arguments</div>
<div class="a" style="left:520px;top:384px;width:303px;height:20px;overflow:hidden"><div class="t " style="left:4px;top:4px;transform:translateX(0.9px) scaleX(1.0073);">• Drag an Input attribute to an Output attribute to assign,</div></div>
<div class="a" style="left:520px;top:411px;width:303px;height:20px;overflow:hidden"><div class="t " style="left:4px;top:4px;transform:translateX(0.89px) scaleX(1.0101);">• Drag an Input element list to an Output one to map the</div></div>
</body></html>
